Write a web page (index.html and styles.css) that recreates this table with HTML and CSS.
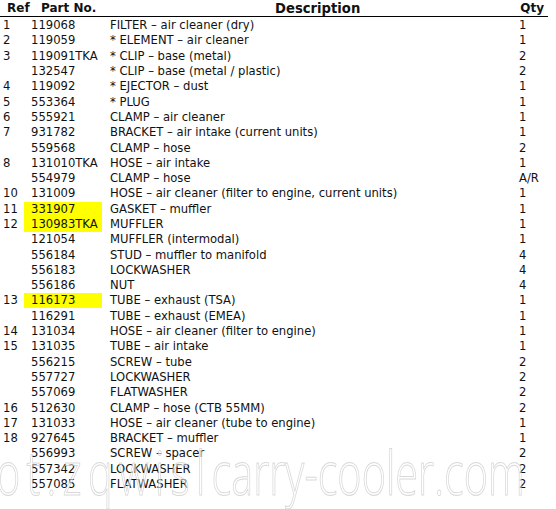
FILE: index.html
```html
<!DOCTYPE html>
<html>
<head>
<meta charset="utf-8">
<link rel="stylesheet" href="styles.css">
</head>
<body>
<div class="sheet">
  <div class="head">
    <span class="h-ref">Ref</span>
    <span class="h-part">Part No.</span>
    <span class="h-desc">Description</span>
    <span class="h-qty">Qty</span>
  </div>
  <div class="rows">
    <div class="row"><span class="ref">1</span><span class="part">119068</span><span class="desc">FILTER – air cleaner (dry)</span><span class="qty">1</span></div>
    <div class="row"><span class="ref">2</span><span class="part">119059</span><span class="desc">* ELEMENT – air cleaner</span><span class="qty">1</span></div>
    <div class="row"><span class="ref">3</span><span class="part">119091TKA</span><span class="desc">* CLIP – base (metal)</span><span class="qty">2</span></div>
    <div class="row"><span class="ref"></span><span class="part">132547</span><span class="desc">* CLIP – base (metal / plastic)</span><span class="qty">2</span></div>
    <div class="row"><span class="ref">4</span><span class="part">119092</span><span class="desc">* EJECTOR – dust</span><span class="qty">1</span></div>
    <div class="row"><span class="ref">5</span><span class="part">553364</span><span class="desc">* PLUG</span><span class="qty">1</span></div>
    <div class="row"><span class="ref">6</span><span class="part">555921</span><span class="desc">CLAMP – air cleaner</span><span class="qty">1</span></div>
    <div class="row"><span class="ref">7</span><span class="part">931782</span><span class="desc">BRACKET – air intake (current units)</span><span class="qty">1</span></div>
    <div class="row"><span class="ref"></span><span class="part">559568</span><span class="desc">CLAMP – hose</span><span class="qty">2</span></div>
    <div class="row"><span class="ref">8</span><span class="part">131010TKA</span><span class="desc">HOSE – air intake</span><span class="qty">1</span></div>
    <div class="row"><span class="ref"></span><span class="part">554979</span><span class="desc">CLAMP – hose</span><span class="qty">A/R</span></div>
    <div class="row"><span class="ref">10</span><span class="part">131009</span><span class="desc">HOSE – air cleaner (filter to engine, current units)</span><span class="qty">1</span></div>
    <div class="row"><span class="ref">11</span><span class="part hl">331907</span><span class="desc">GASKET – muffler</span><span class="qty">1</span></div>
    <div class="row"><span class="ref">12</span><span class="part hl">130983TKA</span><span class="desc">MUFFLER</span><span class="qty">1</span></div>
    <div class="row"><span class="ref"></span><span class="part">121054</span><span class="desc">MUFFLER (intermodal)</span><span class="qty">1</span></div>
    <div class="row"><span class="ref"></span><span class="part">556184</span><span class="desc">STUD – muffler to manifold</span><span class="qty">4</span></div>
    <div class="row"><span class="ref"></span><span class="part">556183</span><span class="desc">LOCKWASHER</span><span class="qty">4</span></div>
    <div class="row"><span class="ref"></span><span class="part">556186</span><span class="desc">NUT</span><span class="qty">4</span></div>
    <div class="row"><span class="ref">13</span><span class="part hl">116173</span><span class="desc">TUBE – exhaust (TSA)</span><span class="qty">1</span></div>
    <div class="row"><span class="ref"></span><span class="part">116291</span><span class="desc">TUBE – exhaust (EMEA)</span><span class="qty">1</span></div>
    <div class="row"><span class="ref">14</span><span class="part">131034</span><span class="desc">HOSE – air cleaner (filter to engine)</span><span class="qty">1</span></div>
    <div class="row"><span class="ref">15</span><span class="part">131035</span><span class="desc">TUBE – air intake</span><span class="qty">1</span></div>
    <div class="row"><span class="ref"></span><span class="part">556215</span><span class="desc">SCREW – tube</span><span class="qty">2</span></div>
    <div class="row"><span class="ref"></span><span class="part">557727</span><span class="desc">LOCKWASHER</span><span class="qty">2</span></div>
    <div class="row"><span class="ref"></span><span class="part">557069</span><span class="desc">FLATWASHER</span><span class="qty">2</span></div>
    <div class="row"><span class="ref">16</span><span class="part">512630</span><span class="desc">CLAMP – hose (CTB 55MM)</span><span class="qty">2</span></div>
    <div class="row"><span class="ref">17</span><span class="part">131033</span><span class="desc">HOSE – air cleaner (tube to engine)</span><span class="qty">1</span></div>
    <div class="row"><span class="ref">18</span><span class="part">927645</span><span class="desc">BRACKET – muffler</span><span class="qty">1</span></div>
    <div class="row"><span class="ref"></span><span class="part">556993</span><span class="desc">SCREW – spacer</span><span class="qty">2</span></div>
    <div class="row"><span class="ref"></span><span class="part">557342</span><span class="desc">LOCKWASHER</span><span class="qty">2</span></div>
    <div class="row"><span class="ref"></span><span class="part">557085</span><span class="desc">FLATWASHER</span><span class="qty">2</span></div>
  </div>
  <div class="watermark"><span class="wm-lead">ot.zqwisl</span>carry-cooler.com</div>
</div>
</body>
</html>
```
FILE: styles.css
```css
html, body {
  margin: 0;
  padding: 0;
  background: #fff;
}
.sheet {
  position: relative;
  width: 556px;
  height: 509px;
  overflow: hidden;
  font-family: "DejaVu Sans", sans-serif;
  font-size: 11.6px;
  color: #111;
}
.head {
  height: 17px;
  border-bottom: 1px solid #000;
  width: 548px;
  display: grid;
  grid-template-columns: 40px 235px 240px 33px;
  align-items: end;
  font-weight: bold;
  font-size: 12px;
  line-height: 15px;
  box-sizing: border-box;
  white-space: nowrap;
}
.h-ref { padding-left: 7px; }
.h-part { padding-left: 1px; }
.h-desc { font-size: 13.2px; }
.h-qty { text-align: right; padding-right: 4px; }
.rows {
  display: grid;
  grid-auto-rows: 15.3px;
  padding-top: 1px;
}
.row {
  display: grid;
  grid-template-columns: 24px 80px 414px 38px;
  align-items: center;
  line-height: 15px;
  white-space: nowrap;
}
.ref { padding-left: 3px; }
.part { padding-left: 7px; height: 15px; margin-right: 2px; }
.hl { background: #ffff00; }
.desc { padding-left: 6px; }
.qty { padding-left: 1px; }
.watermark {
  position: absolute;
  left: -4px;
  top: 431px;
  font-family: "Open Sans", sans-serif;
  font-weight: 300;
  font-size: 60px;
  transform: scaleX(0.69);
  transform-origin: left top;
  color: rgba(255,255,255,0.55);
  -webkit-text-stroke: 1px rgba(190,190,190,0.6);
  white-space: nowrap;
}
.wm-lead { letter-spacing: 9px; }
```
